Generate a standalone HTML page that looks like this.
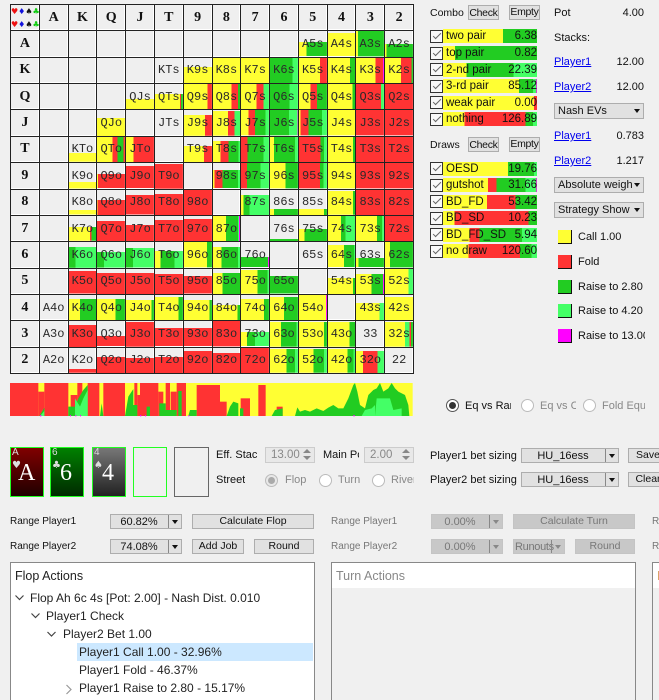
<!DOCTYPE html>
<html><head><meta charset="utf-8"><style>
html,body{margin:0;padding:0;overflow:hidden}
body{width:659px;height:700px;background:#f0f0f0;position:relative;font:11px/14px "Liberation Sans",sans-serif;color:#111}
#g{position:absolute;left:10px;top:4px;width:404px;height:370px;background:#222;display:grid;grid-template-columns:repeat(14,1fr);grid-template-rows:repeat(14,1fr);gap:1px;padding:1px;box-sizing:border-box}
#g b{--h:100%;--c:#0000,#0000;display:flex;align-items:center;justify-content:center;font:12px "Liberation Mono",monospace;color:#2a2a2a;overflow:hidden;white-space:nowrap;background:linear-gradient(90deg,var(--c)) bottom/100% var(--h) no-repeat,linear-gradient(#fff,#fff) bottom/100% 1px no-repeat,linear-gradient(#fff,#fff) right/1px 100% no-repeat,#efefef}
#g b.h{font:bold 14px "Liberation Serif",serif;color:#111}
#g b.z{display:block;font:8px/13px "DejaVu Sans",sans-serif;letter-spacing:0;text-align:center;padding-top:0}
.a{position:absolute;white-space:nowrap;overflow:hidden}
.t{height:14px;line-height:14px}
.g{color:#888}
.r{text-align:right}
.rg{font-size:10px}
.btn{position:absolute;box-sizing:border-box;background:#e1e1e1;border:1px solid #adadad;text-align:center;font-size:10.5px;line-height:13px;overflow:hidden;white-space:nowrap;color:#111}
.dis{background:#c8c8c8;border-color:#c4c4c4;color:#777}
.cb{position:absolute;box-sizing:border-box;background:#e1e1e1;border:1px solid #adadad;font-size:11px;line-height:14px;overflow:hidden;white-space:nowrap;padding-left:3px}
.cb.dis{background:#c8c8c8;border-color:#c4c4c4;color:#777}
.cb:after{content:"";position:absolute;right:3px;top:5px;border:3.5px solid transparent;border-top:4px solid #111;border-bottom:0}
.cb.dis:after{border-top-color:#888}
.cb.s:before{content:"";position:absolute;right:12px;top:0;bottom:0;width:1px;background:#888}
.cb.c{text-align:center;padding:0 14px 0 0}
.ck{position:absolute;left:430px;width:13px;height:13px;box-sizing:border-box;border:1px solid #333;background:#f8f8f8}
.ck:after{content:"";position:absolute;left:2px;top:2px;width:7px;height:3px;border-left:1px solid #666;border-bottom:1px solid #666;transform:rotate(-45deg)}
.bar{position:absolute;left:443px;width:94px;height:14px;line-height:14px;font-size:11.5px;white-space:nowrap;overflow:hidden}
.bar s{text-decoration:none;position:absolute;left:3px}
.bar u{text-decoration:none;position:absolute;right:0}
.lnk{position:absolute;color:#00e;text-decoration:underline;font-size:11px;line-height:14px}
.sq{position:absolute;left:558px;width:13px;height:13px;border-right:1px solid #111;border-bottom:1px solid #111}
.rd{position:absolute;width:13px;height:13px;box-sizing:border-box;border-radius:50%;border:1px solid #bbb;background:#fff}
.card{position:absolute;top:447px;width:34px;height:50px;box-sizing:border-box;border:1.5px solid #2f2;color:#ddd;overflow:hidden}
.card i{position:absolute;left:1px;top:-1px;font:normal 10px/12px "Liberation Sans",sans-serif}
.card em{position:absolute;left:1px;top:11px;font:normal 10px/14px "DejaVu Sans",sans-serif}
.card b{position:absolute;left:9px;top:11px;font:normal 24px/28px "Liberation Serif",serif;color:#fff}
.spin{position:absolute;box-sizing:border-box;border:1px solid #ccc;background:#e8e8e8;color:#888;font-size:11.5px;line-height:14px;padding-left:5px;height:16px}
.spin:after{content:"";position:absolute;right:3px;top:1px;border:4px solid transparent;border-bottom:4px solid #888;border-top:0}
.spin:before{content:"";position:absolute;right:3px;bottom:2px;border:4px solid transparent;border-top:4px solid #888;border-bottom:0}
.box{position:absolute;top:562px;height:150px;box-sizing:border-box;border:1px solid #888;overflow:hidden}
.tr{position:absolute;font-size:12px;line-height:18px;white-space:nowrap;height:18px;color:#222}
</style></head><body>
<div id="g">
<b class="h z"><span style="color:#e11">♥</span><span style="color:#11d">♦</span><span style="color:#111">♠</span><span style="color:#1c1">♣</span><br><span style="color:#e11">♥</span><span style="color:#11d">♦</span><span style="color:#111">♠</span><span style="color:#1c1">♣</span></b><b class="h">A</b><b class="h">K</b><b class="h">Q</b><b class="h">J</b><b class="h">T</b><b class="h">9</b><b class="h">8</b><b class="h">7</b><b class="h">6</b><b class="h">5</b><b class="h">4</b><b class="h">3</b><b class="h">2</b>

<b class="h">A</b><b></b><b></b><b></b><b></b><b></b><b></b><b></b><b></b><b></b><b style="--h:55%;--c:#ff3 28%,#2c2 0">A5s</b><b style="--h:90%;--c:#ff3,#ff3">A4s</b><b style="--c:#ff3 8%,#2c2 0">A3s</b><b style="--h:50%;--c:#ff3 5%,#2c2 0">A2s</b>

<b class="h">K</b><b></b><b></b><b></b><b></b><b>KTs</b><b style="--h:65%;--c:#ff3,#ff3">K9s</b><b style="--c:#ff3,#ff3">K8s</b><b style="--c:#ff3,#ff3">K7s</b><b style="--c:#2c2 80%,#4f6 0">K6s</b><b style="--c:#ff3 75%,#f33 0">K5s</b><b style="--c:#ff3 82%,#2c2 0">K4s</b><b style="--c:#ff3 70%,#f33 0 96%,#f0f 0">K3s</b><b style="--c:#ff3 58%,#f33 0 95%,#2c2 0">K2s</b>

<b class="h">Q</b><b></b><b></b><b></b><b style="--h:40%;--c:#ff3,#ff3">QJs</b><b style="--h:60%;--c:#ff3 90%,#f33 0 93%,#2c2 0">QTs</b><b style="--c:#ff3 84%,#f33 0">Q9s</b><b style="--c:#ff3 68%,#f33 0 93%,#2c2 0">Q8s</b><b style="--c:#ff3 56%,#f33 0 80%,#4f6 0">Q7s</b><b style="--c:#2c2 70%,#4f6 0">Q6s</b><b style="--c:#ff3 42%,#f33 0 65%,#2c2 0">Q5s</b><b style="--c:#ff3 90%,#2c2 0">Q4s</b><b style="--c:#f33 90%,#4f6 0">Q3s</b><b style="--c:#f33,#f33">Q2s</b>

<b class="h">J</b><b></b><b></b><b style="--h:70%;--c:#ff3,#ff3">QJo</b><b></b><b>JTs</b><b style="--h:80%;--c:#ff3 76%,#f33 0">J9s</b><b style="--h:95%;--c:#ff3 55%,#f33 0 80%,#4f6 0">J8s</b><b style="--c:#ff3 28%,#f33 0 50%,#2c2 0 88%,#4f6 0">J7s</b><b style="--c:#2c2 68%,#4f6 0 98%,#f0f 0">J6s</b><b style="--c:#ff3 6%,#f33 0 35%,#2c2 0 82%,#4f6 0">J5s</b><b style="--c:#ff3,#ff3">J4s</b><b style="--c:#f33,#f33">J3s</b><b style="--c:#f33,#f33">J2s</b>

<b class="h">T</b><b></b><b style="--h:35%;--c:#ff3,#ff3">KTo</b><b style="--c:#ff3 56%,#f33 0 74%,#2c2 0 95%,#f33 0">QTo</b><b style="--c:#ff3 28%,#f33 0">JTo</b><b></b><b style="--h:65%;--c:#ff3 72%,#f33 0">T9s</b><b style="--h:85%;--c:#ff3 28%,#f33 0 58%,#2c2 0 95%,#4f6 0">T8s</b><b style="--c:#f33 24%,#2c2 0 80%,#4f6 0">T7s</b><b style="--c:#ff3 15%,#2c2 0 90%,#4f6 0">T6s</b><b style="--c:#f33 78%,#2c2 0 90%,#4f6 0">T5s</b><b style="--c:#ff3 92%,#2c2 0">T4s</b><b style="--c:#f33,#f33">T3s</b><b style="--c:#f33,#f33">T2s</b>

<b class="h">9</b><b></b><b style="--h:25%;--c:#ff3,#ff3">K9o</b><b style="--h:55%;--c:#ff3 4%,#f33 0">Q9o</b><b style="--h:85%;--c:#f33,#f33">J9o</b><b style="--h:95%;--c:#f33,#f33">T9o</b><b></b><b style="--h:70%;--c:#ff3 5%,#f33 0 35%,#2c2 0 92%,#4f6 0">98s</b><b style="--c:#f33 22%,#2c2 0 70%,#4f6 0">97s</b><b style="--c:#ff3 55%,#2c2 0">96s</b><b style="--c:#f33 75%,#2c2 0 88%,#4f6 0">95s</b><b style="--c:#ff3,#ff3">94s</b><b style="--c:#f33,#f33">93s</b><b style="--c:#f33,#f33">92s</b>

<b class="h">8</b><b></b><b style="--h:18%;--c:#ff3,#ff3">K8o</b><b style="--h:60%;--c:#ff3 3%,#f33 0">Q8o</b><b style="--h:78%;--c:#f33,#f33">J8o</b><b style="--h:85%;--c:#f33,#f33">T8o</b><b style="--c:#f33,#f33">98o</b><b></b><b style="--h:80%;--c:#ff3 10%,#2c2 0 30%,#4f6 0">87s</b><b style="--h:25%;--c:#ff3 15%,#2c2 0">86s</b><b style="--h:25%;--c:#ff3 90%,#2c2 0">85s</b><b style="--h:95%;--c:#ff3 92%,#2c2 0">84s</b><b style="--c:#f33,#f33">83s</b><b style="--c:#f33,#f33">82s</b>

<b class="h">7</b><b></b><b style="--h:55%;--c:#ff3 78%,#f33 0 83%,#2c2 0">K7o</b><b style="--h:80%;--c:#f33,#f33">Q7o</b><b style="--h:65%;--c:#f33,#f33">J7o</b><b style="--h:85%;--c:#f33,#f33">T7o</b><b style="--h:90%;--c:#f33,#f33">97o</b><b style="--c:#ff3 48%,#2c2 0 93%,#4f6 0 97%,#f0f 0">87o</b><b></b><b style="--h:10%;--c:#2c2,#2c2">76s</b><b style="--h:50%;--c:#ff3 20%,#2c2 0">75s</b><b style="--c:#ff3 48%,#2c2 0 65%,#4f6 0">74s</b><b style="--c:#ff3 75%,#2c2 0 94%,#4f6 0">73s</b><b style="--c:#f33,#f33">72s</b>

<b class="h">6</b><b></b><b style="--h:80%;--c:#2c2 24%,#4f6 0">K6o</b><b style="--h:60%;--c:#2c2 25%,#4f6 0">Q6o</b><b style="--h:75%;--c:#2c2 25%,#4f6 0">J6o</b><b style="--h:65%;--c:#ff3 20%,#2c2 0 70%,#4f6 0">T6o</b><b style="--c:#ff3 82%,#2c2 0">96o</b><b style="--h:80%;--c:#ff3 32%,#2c2 0 92%,#4f6 0">86o</b><b style="--h:40%;--c:#2c2 96%,#f0f 0">76o</b><b></b><b>65s</b><b style="--h:85%;--c:#ff3 60%,#2c2 0 96%,#4f6 0">64s</b><b style="--h:35%;--c:#ff3 10%,#2c2 0">63s</b><b style="--c:#ff3 18%,#2c2 0">62s</b>

<b class="h">5</b><b></b><b style="--h:90%;--c:#f33,#f33">K5o</b><b style="--h:85%;--c:#f33,#f33">Q5o</b><b style="--h:85%;--c:#f33,#f33">J5o</b><b style="--h:80%;--c:#f33,#f33">T5o</b><b style="--h:70%;--c:#f33,#f33">95o</b><b style="--h:85%;--c:#ff3 36%,#2c2 0">85o</b><b style="--h:95%;--c:#ff3 60%,#2c2 0 95%,#4f6 0">75o</b><b style="--h:70%;--c:#2c2,#2c2">65o</b><b></b><b style="--h:65%;--c:#ff3 92%,#2c2 0">54s</b><b style="--h:80%;--c:#ff3 55%,#2c2 0 96%,#f0f 0">53s</b><b style="--c:#ff3 85%,#4f6 0">52s</b>

<b class="h">4</b><b>A4o</b><b style="--h:85%;--c:#ff3 40%,#2c2 0">K4o</b><b style="--h:85%;--c:#ff3 66%,#2c2 0">Q4o</b><b style="--h:80%;--c:#ff3 92%,#2c2 0">J4o</b><b style="--h:95%;--c:#ff3 85%,#2c2 0">T4o</b><b style="--h:80%;--c:#ff3 92%,#2c2 0">94o</b><b style="--h:60%;--c:#ff3 90%,#2c2 0">84o</b><b style="--h:85%;--c:#ff3 82%,#2c2 0">74o</b><b style="--h:95%;--c:#ff3 50%,#2c2 0">64o</b><b style="--c:#ff3 96%,#f0f 0">54o</b><b></b><b style="--h:70%;--c:#ff3 84%,#4f6 0">43s</b><b style="--h:95%;--c:#ff3,#ff3">42s</b>

<b class="h">3</b><b>A3o</b><b style="--h:85%;--c:#f33,#f33">K3o</b><b style="--h:40%;--c:#f33,#f33">Q3o</b><b style="--h:95%;--c:#f33,#f33">J3o</b><b style="--h:70%;--c:#f33,#f33">T3o</b><b style="--h:70%;--c:#f33,#f33">93o</b><b style="--c:#f33,#f33">83o</b><b style="--h:55%;--c:#ff3 22%,#2c2 0 50%,#4f6 0">73o</b><b style="--h:95%;--c:#ff3 40%,#2c2 0 95%,#4f6 0">63o</b><b style="--h:95%;--c:#ff3 90%,#2c2 0">53o</b><b style="--h:95%;--c:#ff3 80%,#2c2 0">43o</b><b>33</b><b style="--h:95%;--c:#ff3 72%,#4f6 0 88%,#f33 0 94%,#2c2 0">32s</b>

<b class="h">2</b><b>A2o</b><b style="--h:15%;--c:#f33,#f33">K2o</b><b style="--h:65%;--c:#f33,#f33">Q2o</b><b style="--h:60%;--c:#f33,#f33">J2o</b><b style="--h:65%;--c:#f33,#f33">T2o</b><b style="--h:90%;--c:#f33,#f33">92o</b><b style="--h:80%;--c:#f33,#f33">82o</b><b style="--c:#f33,#f33">72o</b><b style="--h:95%;--c:#ff3 60%,#2c2 0 90%,#4f6 0">62o</b><b style="--h:95%;--c:#ff3 52%,#2c2 0 90%,#4f6 0">52o</b><b style="--h:95%;--c:#ff3 72%,#2c2 0 95%,#4f6 0">42o</b><b style="--h:90%;--c:#ff3 25%,#f33 0 78%,#4f6 0">32o</b><b>22</b>
</div>

<!-- strip chart -->
<svg style="position:absolute;left:0;top:0" width="659" height="420" viewBox="0 0 1977 1260">
<g transform="translate(0,1125)">
<rect x="30" y="24" width="1208" height="99" fill="#ff3"/>
<g fill="#f33">
<rect x="30" y="24" width="85" height="99"/><rect x="115" y="50" width="18" height="73"/><rect x="133" y="24" width="72" height="99"/><rect x="212" y="60" width="20" height="63"/><rect x="232" y="24" width="15" height="99"/><rect x="263" y="24" width="35" height="99"/><rect x="310" y="24" width="65" height="99"/><rect x="403" y="24" width="9" height="99"/><rect x="412" y="60" width="8" height="63"/><rect x="420" y="24" width="55" height="99"/><rect x="475" y="50" width="15" height="73"/><rect x="497" y="24" width="13" height="99"/><rect x="512" y="50" width="18" height="73"/><rect x="530" y="24" width="28" height="99"/><rect x="590" y="30" width="70" height="93"/><rect x="660" y="80" width="20" height="43"/><rect x="722" y="70" width="28" height="53"/><rect x="775" y="30" width="22" height="93"/><rect x="830" y="95" width="18" height="28"/>
</g>
<path fill="#2c2" d="M118 123L133 98V123ZM205 123V95H225L235 70L250 45L263 30V123ZM300 123L305 85L310 123ZM375 123L385 65L400 42V123ZM400 123V90H412V123ZM440 123V95H450V123ZM478 123V85H497V105H515V123ZM515 123V105H530V123ZM535 123V48H545V123ZM565 123L570 105H590V123ZM680 123L690 95L700 80L715 85V123ZM720 123V100H730V123ZM815 123L825 105L848 100V123ZM885 123L892 97L900 110L915 105L930 110L950 100L970 108L985 98L1000 90L1015 100L1030 100L1045 70L1060 30L1065 24L1072 50L1080 90L1095 100L1105 60L1120 45L1130 40L1140 24L1150 50L1165 40L1175 24L1185 40L1195 50L1215 60L1225 90L1228 123Z"/>
<path fill="#4f6" d="M120 123L133 108V123ZM225 123V70L240 95L250 70L263 45V123ZM1085 123L1095 105L1115 100L1125 90V123ZM1125 123L1130 70H1170L1180 105L1205 100V123Z"/>
<g fill="#f0f"><rect x="120" y="120" width="4" height="4"/><rect x="210" y="120" width="3" height="4"/><rect x="226" y="120" width="3" height="4"/><rect x="240" y="120" width="3" height="4"/><rect x="420" y="120" width="4" height="4"/><rect x="435" y="120" width="3" height="4"/><rect x="565" y="120" width="3" height="4"/><rect x="1060" y="120" width="4" height="4"/></g>
</g></svg>

<!-- combo panel -->
<div class="a t" style="left:430px;top:6px;font-size:10.5px">Combo</div>
<div class="btn" style="left:468px;top:5px;width:31px;height:15px;line-height:15px;letter-spacing:-.3px">Check</div>
<div class="btn" style="left:509px;top:5px;width:31px;height:15px;line-height:13px;letter-spacing:-.3px">Empty</div>
<i class="ck" style="top:30px"></i><div class="bar" style="top:29px;background:linear-gradient(90deg,#ff3 64%,#2c2 0)"><s>two pair</s><u>6.38</u></div>
<i class="ck" style="top:47px"></i><div class="bar" style="top:46px;background:linear-gradient(90deg,#ff3 13%,#2c2 0)"><s>top pair</s><u>0.82</u></div>
<i class="ck" style="top:63px"></i><div class="bar" style="top:63px;background:linear-gradient(90deg,#ff3 25%,#2c2 0 75%,#4f6 0)"><s>2-nd pair</s><u>22.39</u></div>
<i class="ck" style="top:80px"></i><div class="bar" style="top:79px;background:linear-gradient(90deg,#ff3 81%,#2c2 0 96%,#4f6 0 99%,#c4c 0)"><s>3-rd pair</s><u>85.12</u></div>
<i class="ck" style="top:96px"></i><div class="bar" style="top:96px;background:linear-gradient(90deg,#ff3 97%,#f33 0)"><s>weak pair</s><u>0.00</u></div>
<i class="ck" style="top:113px"></i><div class="bar" style="top:112px;background:linear-gradient(90deg,#ff3 23%,#f33 0 88%,#2c2 0 96%,#4f6 0)"><s>nothing</s><u>126.89</u></div>

<div class="a t" style="left:430px;top:138px;font-size:10.5px">Draws</div>
<div class="btn" style="left:468px;top:137px;width:31px;height:15px;line-height:15px;letter-spacing:-.3px">Check</div>
<div class="btn" style="left:509px;top:137px;width:31px;height:15px;line-height:13px;letter-spacing:-.3px">Empty</div>
<i class="ck" style="top:162px"></i><div class="bar" style="top:162px;background:linear-gradient(90deg,#ff3 69%,#2c2 0 97%,#4f6 0)"><s>OESD</s><u>19.76</u></div>
<i class="ck" style="top:179px"></i><div class="bar" style="top:178px;background:linear-gradient(90deg,#ff3 48%,#f33 0 57%,#2c2 0 88%,#4f6 0 99%,#c4c 0)"><s>gutshot</s><u>31.66</u></div>
<i class="ck" style="top:195px"></i><div class="bar" style="top:195px;background:linear-gradient(90deg,#ff3 47%,#f33 0 77%,#2c2 0)"><s>BD_FD</s><u>53.42</u></div>
<i class="ck" style="top:212px"></i><div class="bar" style="top:211px;background:linear-gradient(90deg,#ff3 12%,#f33 0 91%,#2c2 0)"><s>BD_SD</s><u>10.23</u></div>
<i class="ck" style="top:228px"></i><div class="bar" style="top:228px;background:linear-gradient(90deg,#ff3 28%,#f33 0 39%,#2c2 0 84%,#4f6 0)"><s>BD_FD_SD</s><u>5.94</u></div>
<i class="ck" style="top:245px"></i><div class="bar" style="top:244px;background:linear-gradient(90deg,#ff3 27%,#f33 0 82%,#2c2 0 94%,#4f6 0)"><s>no draw</s><u>120.60</u></div>

<!-- right column -->
<div class="a t" style="left:554px;top:6px">Pot</div><div class="a t r" style="left:600px;width:44px;top:6px">4.00</div>
<div class="a t" style="left:554px;top:31px">Stacks:</div>
<div class="lnk" style="left:554px;top:55px">Player1</div><div class="a t r" style="left:600px;width:44px;top:55px">12.00</div>
<div class="lnk" style="left:554px;top:80px">Player2</div><div class="a t r" style="left:600px;width:44px;top:80px">12.00</div>
<div class="cb" style="left:554px;top:103px;width:90px;height:16px">Nash EVs</div>
<div class="lnk" style="left:554px;top:129px">Player1</div><div class="a t r" style="left:600px;width:44px;top:129px">0.783</div>
<div class="lnk" style="left:554px;top:154px">Player2</div><div class="a t r" style="left:600px;width:44px;top:154px">1.217</div>
<div class="cb" style="left:554px;top:177px;width:90px;height:16px">Absolute weigh</div>
<div class="cb" style="left:554px;top:202px;width:90px;height:16px">Strategy Show</div>
<i class="sq" style="top:230px;background:#ff3"></i><div class="a t" style="left:578px;top:230px">Call 1.00</div>
<i class="sq" style="top:255px;background:#f33"></i><div class="a t" style="left:578px;top:255px">Fold</div>
<i class="sq" style="top:280px;background:#2c2"></i><div class="a t" style="left:578px;top:280px">Raise to 2.80</div>
<i class="sq" style="top:304px;background:#4f6"></i><div class="a t" style="left:578px;top:304px">Raise to 4.20</div>
<i class="sq" style="top:329px;background:#f0f"></i><div class="a t" style="left:578px;top:329px;width:67px">Raise to 13.00</div>

<!-- eq radios -->
<i class="rd" style="left:446px;top:399px;border-color:#555"></i><i class="a" style="left:449px;top:402px;width:7px;height:7px;border-radius:50%;background:#333"></i>
<div class="a t" style="left:465px;top:399px;width:46px">Eq vs Ran</div>
<i class="rd" style="left:521px;top:399px"></i><div class="a t g" style="left:540px;top:399px;width:36px">Eq vs C</div>
<i class="rd" style="left:583px;top:399px"></i><div class="a t g" style="left:602px;top:399px;width:43px">Fold Equi</div>

<!-- cards -->
<div class="card" style="left:10px;background:linear-gradient(#800000,#200000)"><i>A</i><em>♥</em><b style="left:7px">A</b></div>
<div class="card" style="left:50px;background:linear-gradient(#008000,#002a00)"><i>6</i><em>♣</em><b>6</b></div>
<div class="card" style="left:92px;background:linear-gradient(#777,#222)"><i>4</i><em>♠</em><b>4</b></div>
<div class="card" style="left:133px;background:#f0f0f0"></div>
<div class="card" style="left:174px;width:35px;background:#f0f0f0;border-color:#666"></div>

<!-- controls -->
<div class="a t" style="left:216px;top:448px;width:41px">Eff. Stack</div>
<div class="spin" style="left:265px;top:447px;width:50px">13.00</div>
<div class="a t" style="left:323px;top:448px;width:36px">Main Pot</div>
<div class="spin" style="left:364px;top:447px;width:50px">2.00</div>
<div class="a t" style="left:216px;top:473px">Street</div>
<i class="rd" style="left:265px;top:474px;background:#e8e8e8;border-color:#bbb"></i><i class="a" style="left:268px;top:477px;width:7px;height:7px;border-radius:50%;background:#aaa"></i>
<div class="a t g" style="left:285px;top:473px">Flop</div>
<i class="rd" style="left:319px;top:474px"></i><div class="a t g" style="left:338px;top:473px">Turn</div>
<i class="rd" style="left:372px;top:474px"></i><div class="a t g" style="left:391px;top:473px;width:23px">River</div>
<div class="a t" style="left:430px;top:449px">Player1 bet sizing</div>
<div class="cb s c" style="left:521px;top:448px;width:98px;height:15px;line-height:14px">HU_16ess</div>
<div class="btn" style="left:628px;top:448px;width:40px;height:15px">Save</div>
<div class="a t" style="left:430px;top:473px">Player2 bet sizing</div>
<div class="cb s c" style="left:521px;top:472px;width:98px;height:15px;line-height:14px">HU_16ess</div>
<div class="btn" style="left:628px;top:472px;width:40px;height:15px">Clear</div>

<!-- range rows -->
<div class="a t rg" style="left:10px;top:515px">Range Player1</div>
<div class="cb s c" style="left:110px;top:514px;width:72px;height:15px">60.82%</div>
<div class="btn" style="left:192px;top:514px;width:122px;height:15px">Calculate Flop</div>
<div class="a t rg" style="left:10px;top:540px">Range Player2</div>
<div class="cb s c" style="left:110px;top:539px;width:72px;height:15px">74.08%</div>
<div class="btn" style="left:192px;top:539px;width:52px;height:15px">Add Job</div>
<div class="btn" style="left:254px;top:539px;width:60px;height:15px">Round</div>

<div class="a t rg" style="left:331px;top:515px;color:#777">Range Player1</div>
<div class="cb s c dis" style="left:431px;top:514px;width:72px;height:15px">0.00%</div>
<div class="btn dis" style="left:513px;top:514px;width:122px;height:15px">Calculate Turn</div>
<div class="a t rg" style="left:331px;top:540px;color:#777">Range Player2</div>
<div class="cb s c dis" style="left:431px;top:539px;width:72px;height:15px">0.00%</div>
<div class="cb s dis" style="left:513px;top:539px;width:52px;height:15px;padding-left:1px;letter-spacing:-.3px">Runouts</div>
<div class="btn dis" style="left:575px;top:539px;width:60px;height:15px">Round</div>
<div class="a t rg" style="left:652px;top:515px;color:#777">Range</div>
<div class="a t rg" style="left:652px;top:540px;color:#777">Range</div>

<!-- flop box -->
<div class="box" style="left:10px;width:305px;background:#fff"></div>
<div class="tr" style="left:15px;top:567px;font-size:12.5px">Flop Actions</div>
<svg class="a" style="left:14px;top:592px" width="70" height="105" fill="none" stroke="#444" stroke-width="1.2"><path d="M1.500 3.500L5.500 7.500L9.500 3.500"/><path d="M17.500 21.500L21.500 25.500L25.500 21.500"/><path d="M33.500 40L37.500 44L41.500 40"/><path d="M52.500 93L57 97.500L52.500 102" stroke="#999"/></svg>
<div class="tr" style="left:30px;top:589px">Flop Ah 6c 4s [Pot: 2.00] - Nash Dist. 0.010</div>
<div class="tr" style="left:46px;top:607px">Player1 Check</div>
<div class="tr" style="left:63px;top:625px">Player2 Bet 1.00</div>
<div class="a" style="left:77px;top:643px;width:236px;height:18px;background:#cce8ff"></div>
<div class="tr" style="left:79px;top:643px">Player1 Call 1.00 - 32.96%</div>
<div class="tr" style="left:79px;top:661px">Player1 Fold - 46.37%</div>
<div class="tr" style="left:79px;top:679px">Player1 Raise to 2.80 - 15.17%</div>

<!-- turn box -->
<div class="box" style="left:331px;width:305px;background:#f0f0f0"></div>
<div class="a" style="left:332px;top:563px;width:303px;height:25px;background:#fff"></div>
<div class="tr" style="left:336px;top:567px;font-size:12.5px;color:#888">Turn Actions</div>
<!-- river box -->
<div class="box" style="left:652px;width:30px;background:#f0f0f0"></div>
<div class="a" style="left:653px;top:563px;width:10px;height:25px;background:#fff"></div>
<div class="tr" style="left:657px;top:567px;font-size:12.5px;color:#d9a066">River</div>
</body></html>
